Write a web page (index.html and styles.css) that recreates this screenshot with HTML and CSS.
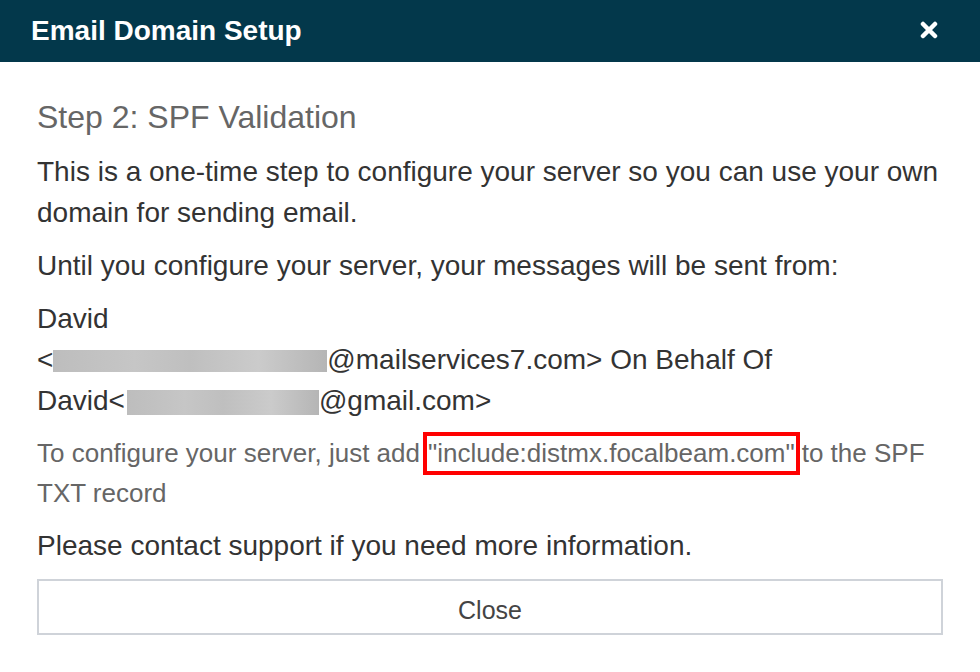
FILE: index.html
```html
<!DOCTYPE html>
<html>
<head>
<meta charset="utf-8">
<link rel="stylesheet" href="styles.css">
</head>
<body>
<div class="dialog">
  <div class="header">
    <div class="title">Email Domain Setup</div>
    <svg class="close-x" width="18" height="18" viewBox="0 0 18 18"><path d="M3 3 L15 15 M15 3 L3 15" stroke="#fff" stroke-width="4.5" stroke-linecap="round"/></svg>
  </div>
  <div class="body">
    <h2 class="step">Step 2: SPF Validation</h2>
    <p class="txt">This is a one-time step to configure your server so you can use your own domain for sending email.</p>
    <p class="txt">Until you configure your server, your messages will be sent from:</p>
    <p class="txt addr">David<br>&lt;<span class="redact r1"></span>@mailservices7.com&gt; On Behalf Of<br>David&lt;<span class="redact r2"></span>@gmail.com&gt;</p>
    <p class="note">To configure your server, just add<span class="hl">"include:distmx.focalbeam.com"</span>to the SPF TXT record</p>
    <p class="txt last">Please contact support if you need more information.</p>
    <button class="btn">Close</button>
  </div>
</div>
</body>
</html>
```
FILE: styles.css
```css
html, body {
  margin: 0;
  padding: 0;
  background: #fff;
}
.dialog {
  width: 980px;
  font-family: "Liberation Sans", Arial, sans-serif;
}
.header {
  height: 62px;
  background: #03384b;
  display: flex;
  align-items: center;
  justify-content: space-between;
  padding: 0 42px 0 31px;
}
.title {
  color: #fff;
  font-weight: bold;
  font-size: 28px;
}
.close-x {
  display: block;
  margin-top: -3px;
}
.body {
  padding: 0 37px;
}
.step {
  margin: 0;
  padding-top: 35px;
  font-weight: normal;
  font-size: 32px;
  line-height: 40px;
  color: #666;
  margin-bottom: 14px;
}
.txt {
  margin: 0 0 12px 0;
  font-size: 28px;
  line-height: 41px;
  color: #333;
}
.note {
  margin: 0 0 12px 0;
  font-size: 26px;
  line-height: 40px;
  color: #666;
}
.hl {
  border: 4px solid #f00;
  padding: 2px 1px 3px 1px;
  margin-left: 3px;
  margin-right: 2px;
}
.redact {
  display: inline-block;
  height: 22px;
  vertical-align: -3px;
  background: linear-gradient(90deg, #bdbdbd 0%, #c6c6c6 30%, #bfbfbf 50%, #cbcbcb 75%, #b5b5b5 100%);
}
.r1 { width: 274px; margin-left: 0; }
.r2 { width: 192px; height: 25px; vertical-align: -5px; margin-left: 2px; }
.last {
  margin-bottom: 13px;
}
.btn {
  display: block;
  width: 100%;
  height: 56px;
  padding-top: 8px;
  background: #fff;
  border: 2px solid #cfd3d9;
  font-family: "Liberation Sans", Arial, sans-serif;
  font-size: 25px;
  color: #444;
}
```
